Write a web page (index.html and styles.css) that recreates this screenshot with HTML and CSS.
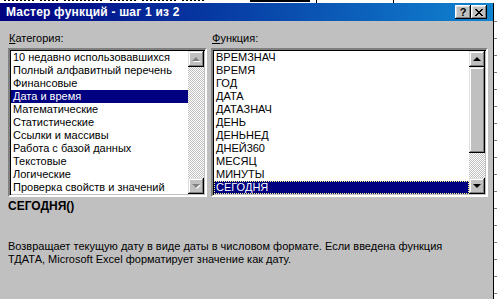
FILE: index.html
```html
<!DOCTYPE html>
<html lang="ru">
<head>
    <meta charset="UTF-8">
    <title>Мастер функций - шаг 1 из 2</title>
    <link rel="stylesheet" href="styles.css">
</head>
<body>
    <!-- bottoms of worksheet glyphs peeking above the dialog -->
    <div class="sheet-top">
        <span class="ink w30"></span>
        <span class="ink w18"></span>
        <span class="ink w40"></span>
        <span class="ink w26"></span>
        <span class="ink w34"></span>
        <span class="ink w22 gap-big"></span>
        <span class="ink w60 thick"></span>
        <span class="vline"></span>
        <span class="vline gap-wide"></span>
    </div>

    <div class="screen">
        <div class="dialog">
            <div class="titlebar">
                <span class="title">Мастер функций - шаг 1 из 2</span>
                <div class="caption-btns">
                    <span class="cap-btn cap-help">?</span>
                    <span class="cap-btn cap-close">
                        <svg width="8" height="7" viewBox="0 0 8 7">
                            <path d="M0 0h2v1h1v1h2V1h1V0h2v1H7v1H6v1H5v1h1v1h1v1h1v1H6V6H5V5H3v1H2v1H0V6h1V5h1V4h1V3H2V2H1V1H0z" fill="#000"/>
                        </svg>
                    </span>
                </div>
            </div>

            <div class="body">
                <div class="lists">
                    <div class="col col-cat">
                        <div class="label"><u>К</u>атегория:</div>
                        <div class="listbox">
                            <ul class="items">
                                <li>10 недавно использовавшихся</li>
                                <li>Полный алфавитный перечень</li>
                                <li>Финансовые</li>
                                <li class="selected">Дата и время</li>
                                <li>Математические</li>
                                <li>Статистические</li>
                                <li>Ссылки и массивы</li>
                                <li>Работа с базой данных</li>
                                <li>Текстовые</li>
                                <li>Логические</li>
                                <li>Проверка свойств и значений</li>
                            </ul>
                            <div class="scrollbar disabled">
                                <span class="sb-btn"><span class="arrow up"></span></span>
                                <span class="sb-track"></span>
                                <span class="sb-btn"><span class="arrow down"></span></span>
                            </div>
                        </div>
                    </div>

                    <div class="col col-fn">
                        <div class="label"><u>Ф</u>ункция:</div>
                        <div class="listbox">
                            <ul class="items">
                                <li>ВРЕМЗНАЧ</li>
                                <li>ВРЕМЯ</li>
                                <li>ГОД</li>
                                <li>ДАТА</li>
                                <li>ДАТАЗНАЧ</li>
                                <li>ДЕНЬ</li>
                                <li>ДЕНЬНЕД</li>
                                <li>ДНЕЙ360</li>
                                <li>МЕСЯЦ</li>
                                <li>МИНУТЫ</li>
                                <li class="selected focused">СЕГОДНЯ</li>
                            </ul>
                            <div class="scrollbar">
                                <span class="sb-btn"><span class="arrow up"></span></span>
                                <span class="sb-thumb"></span>
                                <span class="sb-track"></span>
                                <span class="sb-btn"><span class="arrow down"></span></span>
                            </div>
                        </div>
                    </div>
                </div>

                <div class="fn-sig">СЕГОДНЯ()</div>
                <p class="fn-desc">Возвращает текущую дату в виде даты в числовом формате. Если введена функция<br>ТДАТА, Microsoft Excel форматирует значение как дату.</p>
            </div>
        </div>
        <div class="sheet-right"></div>
    </div>
</body>
</html>
```

FILE: styles.css
```css
/* Excel function wizard, Windows 98 look */
body {
    margin: 0;
    padding: 0;
    background-color: #fff;
    font-family: "Liberation Sans", Arial, sans-serif;
    font-size: 11px;
    color: #000;
    overflow: hidden;
}

/* strip of the worksheet visible above the dialog */
.sheet-top {
    height: 3px;
    display: flex;
    align-items: flex-start;
    gap: 6px;
    padding-left: 4px;
    background-color: #fff;
}

.ink {
    display: block;
    height: 1px;
    background-image: repeating-linear-gradient(to right, #000 0, #000 2px, transparent 2px, transparent 4px);
}

.ink.thick {
    height: 2px;
    background: #000;
}

.w18 { width: 18px; }
.w22 { width: 22px; }
.w26 { width: 26px; }
.w30 { width: 30px; }
.w34 { width: 34px; }
.w40 { width: 40px; }
.w60 { width: 60px; }

.gap-big {
    margin-right: 40px;
}

.vline {
    width: 1px;
    height: 3px;
    background: #000;
}

.gap-wide {
    margin-left: 70px;
}

.screen {
    display: flex;
}

.dialog {
    width: 493px;
    height: 296px;
    background-color: #c0c0c0;
    border-right: 1px solid #000;
    display: flex;
    flex-direction: column;
}

.sheet-right {
    flex: 1;
    background-color: #fff;
    background-image: repeating-linear-gradient(to bottom, transparent 0, transparent 16px, #808080 16px, #808080 17px);
    background-position: 0 2px;
}

/* Title bar */
.titlebar {
    height: 18px;
    display: flex;
    align-items: center;
    padding: 0 6px 0 6px;
    background: linear-gradient(to right, #000080, #1084d0);
}

.title {
    color: #fff;
    font-weight: bold;
    font-size: 12px;
    letter-spacing: 0.2px;
    white-space: nowrap;
}

.caption-btns {
    margin-left: auto;
    display: flex;
}

.cap-btn {
    width: 16px;
    height: 14px;
    box-sizing: border-box;
    display: flex;
    align-items: center;
    justify-content: center;
    background-color: #c0c0c0;
    box-shadow: inset -1px -1px #000, inset 1px 1px #fff, inset -2px -2px #808080, inset 2px 2px #dfdfdf;
    font-weight: bold;
    font-size: 11px;
    line-height: 14px;
}

/* Dialog body */
.body {
    padding: 11px 0 0 0;
}

.lists {
    display: flex;
    gap: 6px;
    padding-left: 9px;
}

.col-cat {
    width: 197px;
}

.col-fn {
    width: 275px;
}

.label {
    line-height: 13px;
    margin-bottom: 4px;
    white-space: nowrap;
}

.label u {
    text-decoration-thickness: 1px;
    text-underline-offset: 1px;
}

.listbox {
    height: 143px;
    display: flex;
    background-color: #fff;
    border: 2px solid;
    border-color: #808080 #fff #fff #808080;
    box-shadow: inset 1px 1px #000, inset -1px -1px #c0c0c0;
    padding: 1px;
    margin: -1px;
}

.items {
    list-style: none;
    margin: 0;
    padding: 0;
    flex: 1;
}

.items li {
    height: 13px;
    line-height: 13px;
    padding-left: 2px;
    white-space: nowrap;
}

.items li.selected {
    background-color: #000080;
    color: #fff;
}

.items li.focused {
    outline: 1px dotted #ffff80;
    outline-offset: -1px;
}

/* Scrollbars */
.scrollbar {
    width: 16px;
    display: flex;
    flex-direction: column;
}

.sb-btn,
.sb-thumb {
    display: flex;
    align-items: center;
    justify-content: center;
    background-color: #c0c0c0;
    box-shadow: inset -1px -1px #000, inset 1px 1px #dfdfdf, inset -2px -2px #808080, inset 2px 2px #fff;
}

.sb-btn {
    height: 16px;
    flex: none;
}

.sb-thumb {
    height: 86px;
    flex: none;
}

.sb-track {
    flex: 1;
    background-color: #fff;
    background-image: repeating-conic-gradient(#c0c0c0 0 25%, #fff 0 50%);
    background-size: 2px 2px;
}

.arrow {
    width: 0;
    height: 0;
    border-left: 4px solid transparent;
    border-right: 4px solid transparent;
}

.arrow.up {
    border-bottom: 4px solid #000;
}

.arrow.down {
    border-top: 4px solid #000;
}

.disabled .arrow.up {
    border-bottom-color: #808080;
    filter: drop-shadow(1px 1px 0 #fff);
}

.disabled .arrow.down {
    border-top-color: #808080;
    filter: drop-shadow(1px 1px 0 #fff);
}

/* Function description */
.fn-sig {
    margin: 4px 0 0 8px;
    font-weight: bold;
    font-size: 12px;
    line-height: 13px;
}

.fn-desc {
    margin: 27px 0 0 8px;
    line-height: 13px;
}
```
